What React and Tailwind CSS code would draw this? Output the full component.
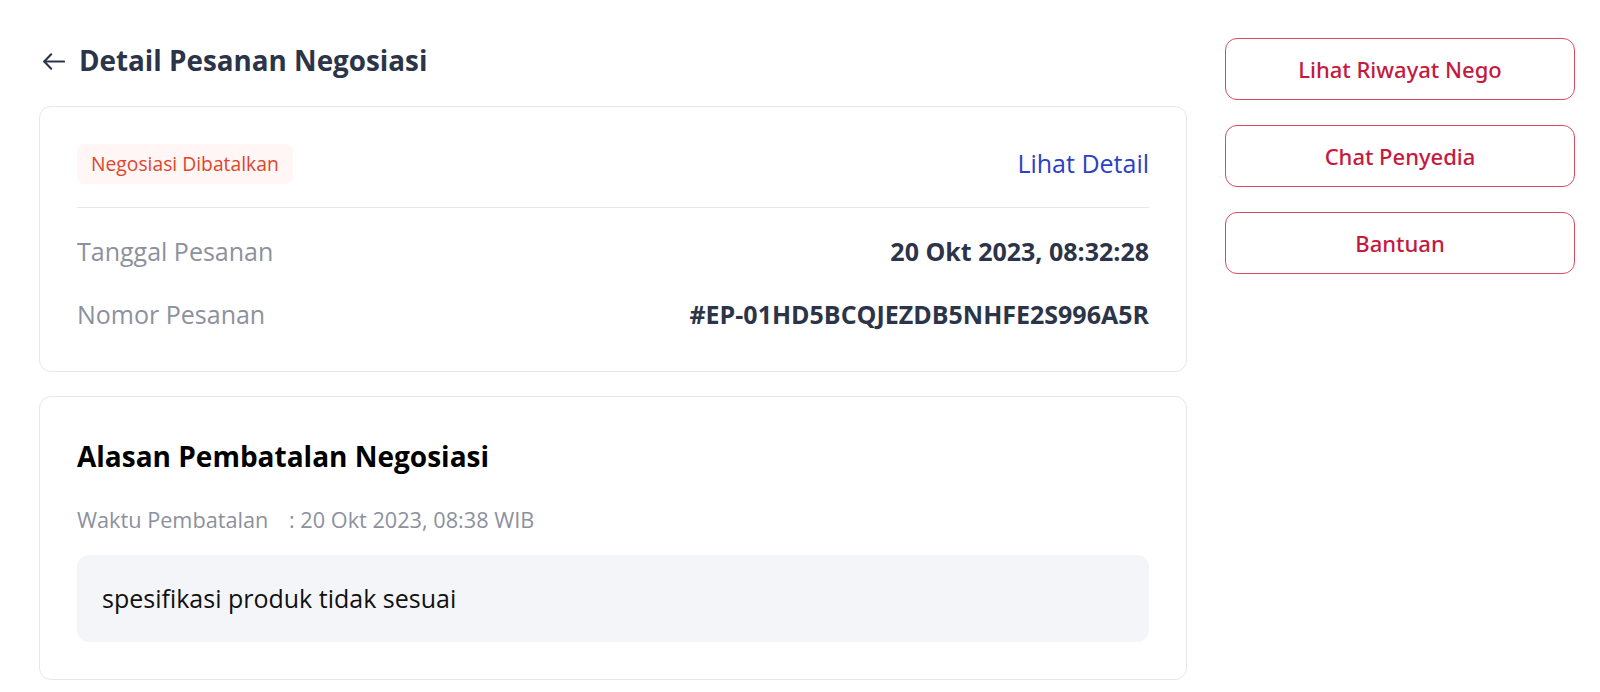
import React from 'react';

const rows = [
  { label: 'Tanggal Pesanan', value: '20 Okt 2023, 08:32:28' },
  { label: 'Nomor Pesanan', value: '#EP-01HD5BCQJEZDB5NHFE2S996A5R' },
];

const actions = ['Lihat Riwayat Nego', 'Chat Penyedia', 'Bantuan'];

const BackArrow = () => (
  <svg width="22" height="17" viewBox="0 0 22 17" fill="none" stroke="currentColor" strokeWidth="2.1" strokeLinecap="round" strokeLinejoin="round">
    <path d="M21 8.5H1.5" />
    <path d="M8.2 1.3 1.2 8.5l7 7.2" />
  </svg>
);

const App = () => {
  return (
    <div className="flex gap-[38px] pl-[39px] pr-[25px] pt-[38px] min-h-screen bg-white font-['Open_Sans',sans-serif]">
      {/* Main column */}
      <div className="w-[1148px] flex flex-col">
        <div className="h-[46px] mb-[22px] flex items-center gap-[14px] text-[#2b3448]">
          <span className="ml-[4px] flex">
            <BackArrow />
          </span>
          <h1 className="text-[27.8px] font-bold leading-none">Detail Pesanan Negosiasi</h1>
        </div>

        <div className="border border-[#e6e7eb] rounded-xl px-[37px] pt-[37px] pb-[41px]">
          <div className="flex items-center justify-between">
            <span className="h-[40px] px-[14px] flex items-center rounded-lg bg-[#fff6f5] text-[19.3px] text-[#e0452d]">
              Negosiasi Dibatalkan
            </span>
            <button className="text-[25px] text-[#2c40c7]">Lihat Detail</button>
          </div>
          <div className="h-px bg-[#e6e7eb] mt-[23px] mb-[29px]" />
          <div className="flex flex-col gap-[33px]">
            {rows.map((r) => (
              <div key={r.label} className="flex items-center justify-between h-[30px]">
                <span className="text-[25px] text-[#8c919d]">{r.label}</span>
                <span className="text-[25px] font-bold text-[#2b3448]">{r.value}</span>
              </div>
            ))}
          </div>
        </div>

        <div className="mt-[24px] border border-[#e6e7eb] rounded-xl px-[37px] pt-[41px] pb-[37px]">
          <h2 className="text-[28px] font-bold leading-[36px] text-black">Alasan Pembatalan Negosiasi</h2>
          <div className="mt-[32px] text-[21.7px] leading-[28px] text-[#8c919d]">
            <span className="inline-block w-[212px]">Waktu Pembatalan</span>
            <span>: 20 Okt 2023, 08:38 WIB</span>
          </div>
          <div className="mt-[21px] h-[87px] rounded-xl bg-[#f4f5f9] px-[25px] flex items-center text-[25px] text-[#111]">
            spesifikasi produk tidak sesuai
          </div>
        </div>
      </div>

      {/* Side actions */}
      <div className="w-[350px] flex flex-col gap-[25px]">
        {actions.map((a) => (
          <button
            key={a}
            className="h-[62px] rounded-xl border border-[#d84a62] font-['Noto_Sans',sans-serif] text-[22px] font-medium text-[#c41a40]"
          >
            {a}
          </button>
        ))}
      </div>
    </div>
  );
};

export default App;
